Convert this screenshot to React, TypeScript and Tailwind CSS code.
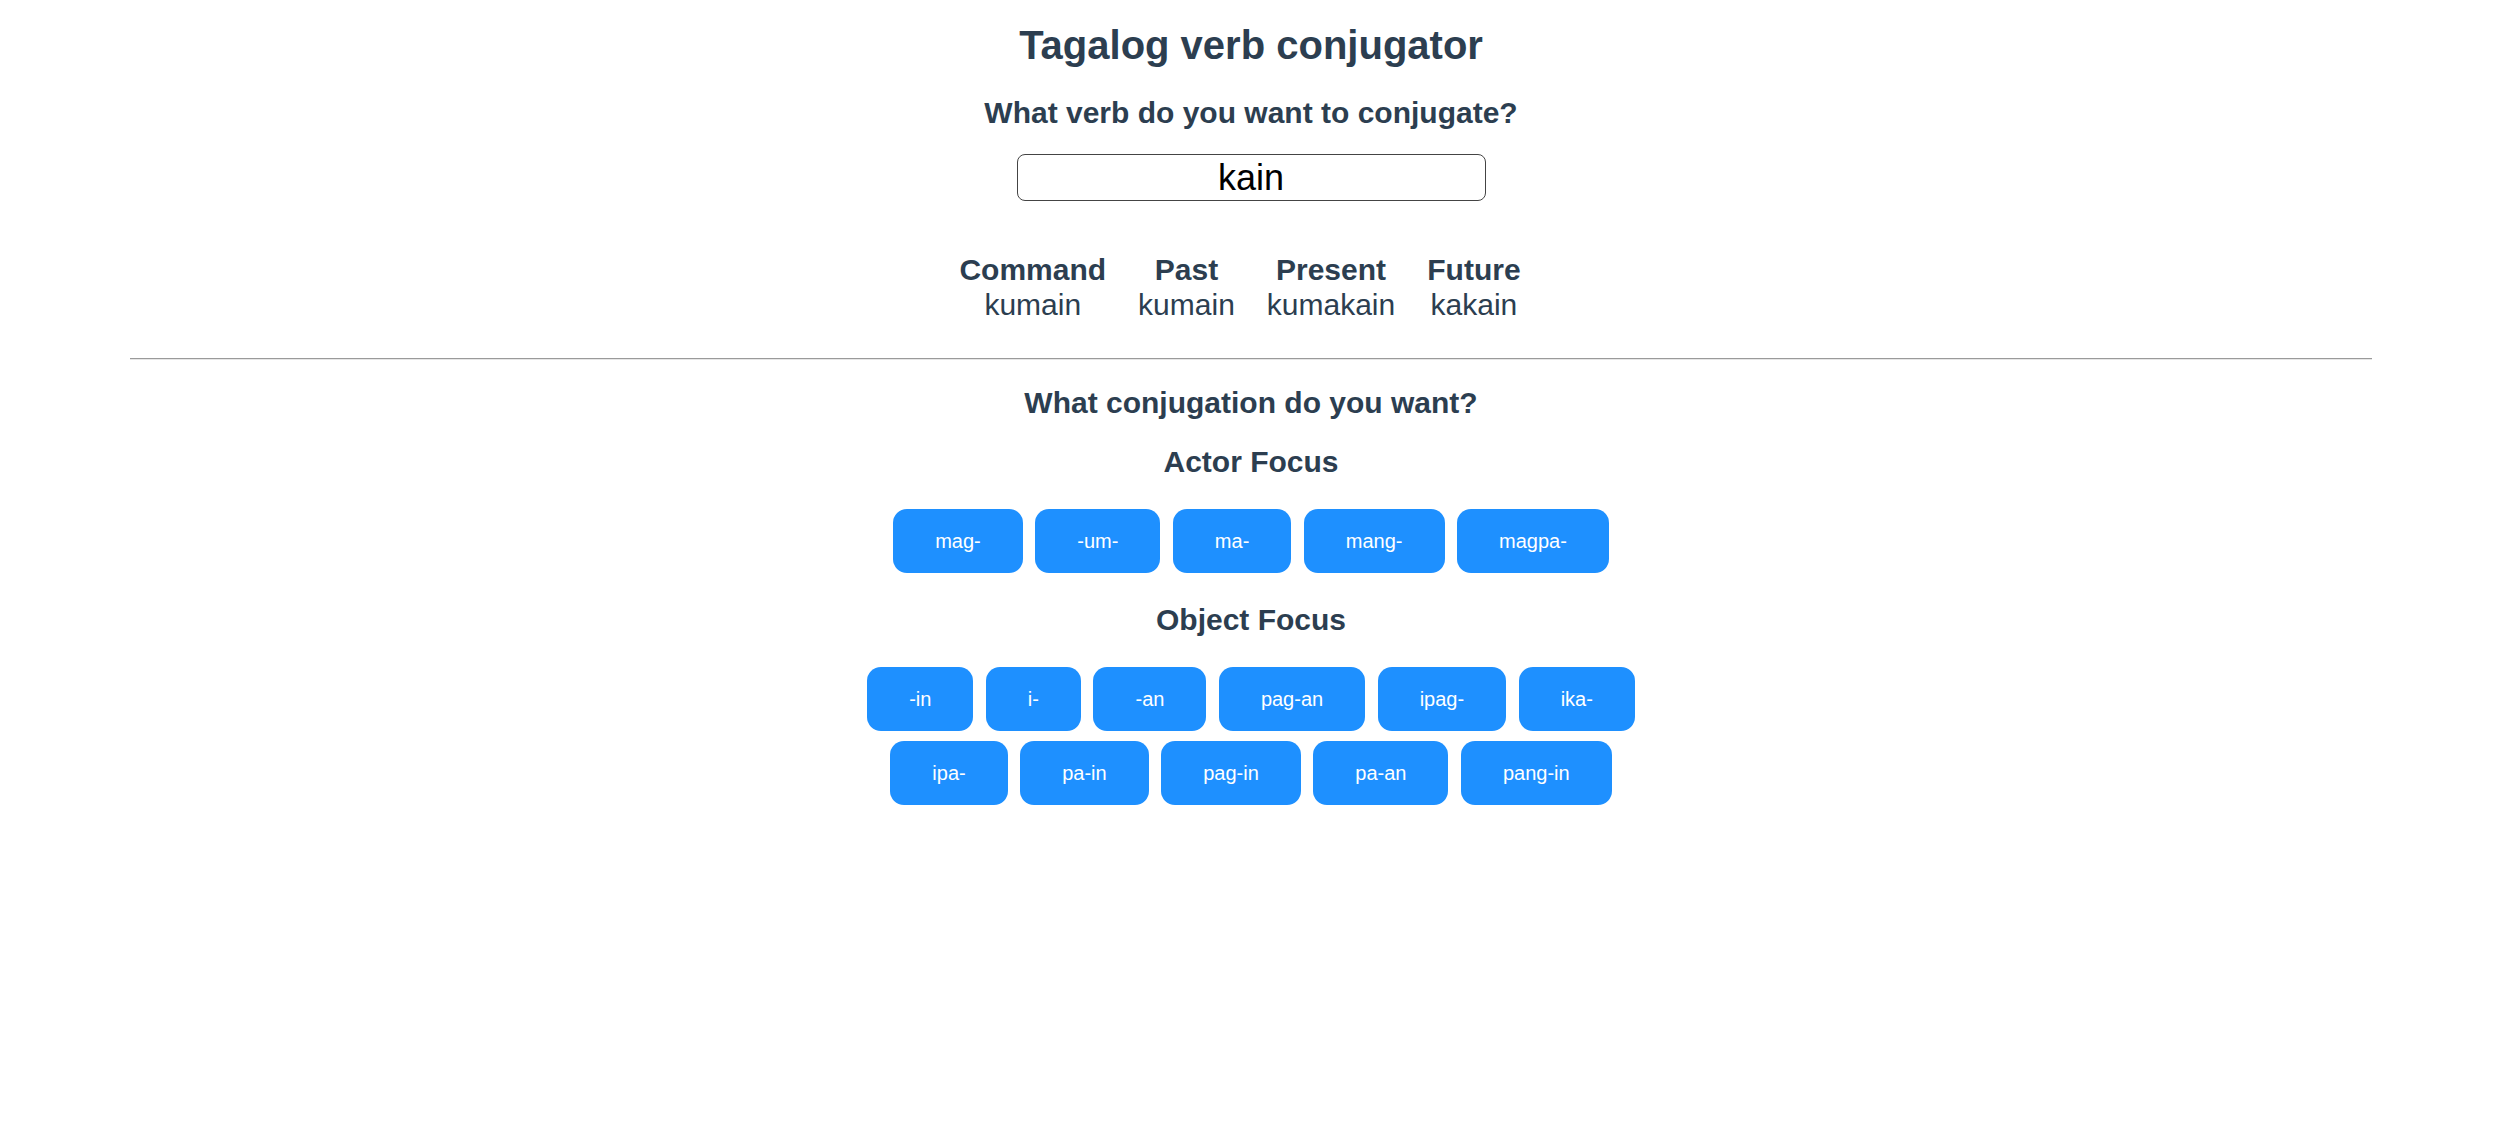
const tenses = [
  { label: "Command", form: "kumain" },
  { label: "Past", form: "kumain" },
  { label: "Present", form: "kumakain" },
  { label: "Future", form: "kakain" },
];

const actorFocus = ["mag-", "-um-", "ma-", "mang-", "magpa-"];
const objectFocus = [
  "-in",
  "i-",
  "-an",
  "pag-an",
  "ipag-",
  "ika-",
  "ipa-",
  "pa-in",
  "pag-in",
  "pa-an",
  "pang-in",
];

function AffixButtons({ affixes }: { affixes: string[] }) {
  return (
    <div className="mx-auto flex max-w-[800px] flex-wrap justify-center gap-x-[12.5px] gap-y-[10px]">
      {affixes.map((affix) => (
        <button
          key={affix}
          className="flex h-[64px] items-center rounded-[14px] bg-[#1e90ff] px-[42px] text-[20px] leading-[23px] text-white"
        >
          {affix}
        </button>
      ))}
    </div>
  );
}

export default function App() {
  return (
    <div
      className="min-h-screen bg-white text-center text-[#2c3e50]"
      style={{ fontFamily: '"Liberation Sans", Arial, Helvetica, sans-serif' }}
    >
      <h1 className="pt-[22px] text-[40px] font-bold leading-[46px]">
        Tagalog verb conjugator
      </h1>

      <h2 className="mt-[28px] text-[30px] font-bold leading-[34px]">
        What verb do you want to conjugate?
      </h2>

      <div className="mt-[24px] flex justify-center">
        <input
          defaultValue="kain"
          className="h-[47px] w-[469px] rounded-[8px] border border-[#444] bg-white text-center text-[36px] leading-[41px] text-black outline-none"
        />
      </div>

      <table className="mx-auto mt-[51px]">
        <thead>
          <tr>
            {tenses.map((t) => (
              <th
                key={t.label}
                className="p-0 pl-[5px] pr-[27px] text-center text-[30px] font-bold leading-[35px]"
              >
                {t.label}
              </th>
            ))}
          </tr>
        </thead>
        <tbody>
          <tr>
            {tenses.map((t) => (
              <td
                key={t.label}
                className="p-0 pl-[5px] pr-[27px] text-center text-[30px] leading-[35px]"
              >
                {t.form}
              </td>
            ))}
          </tr>
        </tbody>
      </table>

      <hr className="mx-[130px] mt-[36px] border-t border-b border-t-[#9a9a9a] border-b-[#e6e6e6]" />

      <h2 className="mt-[26px] text-[30px] font-bold leading-[34px]">
        What conjugation do you want?
      </h2>

      <h3 className="mt-[25px] mb-[30px] text-[30px] font-bold leading-[34px]">
        Actor Focus
      </h3>
      <AffixButtons affixes={actorFocus} />

      <h3 className="mt-[30px] mb-[30px] text-[30px] font-bold leading-[34px]">
        Object Focus
      </h3>
      <AffixButtons affixes={objectFocus} />
    </div>
  );
}
